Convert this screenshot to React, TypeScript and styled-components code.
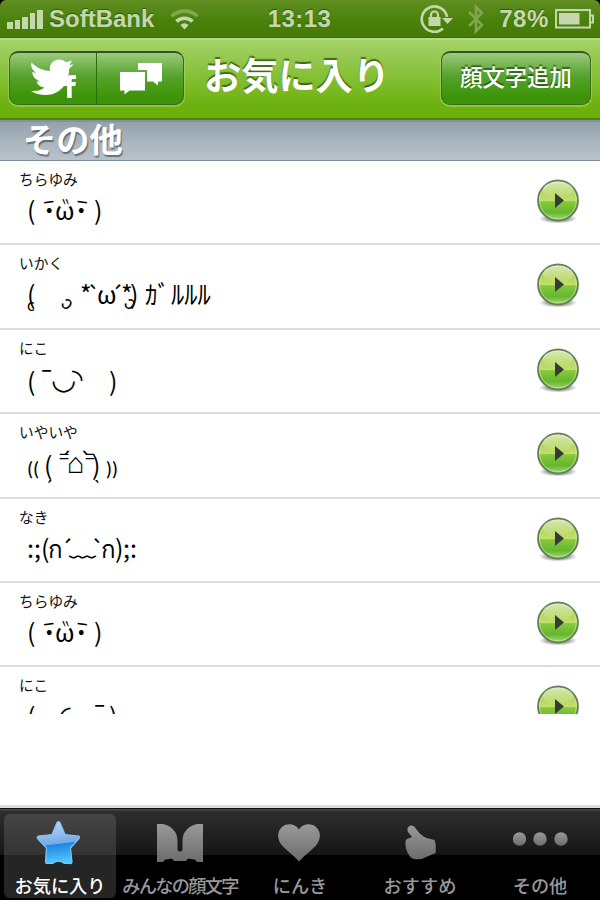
import React from 'react';
import styled, { createGlobalStyle } from 'styled-components';

const jp = '"Noto Sans CJK JP", sans-serif';

const GlobalStyle = createGlobalStyle`
  * { box-sizing: border-box; }
  body { margin: 0; background: #000; font-family: ${jp}; }
`;

const Screen = styled.main`
  width: 600px;
  height: 900px;
  display: flex;
  flex-direction: column;
  background: #fff;
  overflow: hidden;
`;

const StatusWrap = styled.div`
  background: #000;
  flex: none;
`;

const StatusBar = styled.header`
  height: 38px;
  display: grid;
  grid-template-columns: 1fr auto 1fr;
  align-items: center;
  padding: 0 6px 0 7px;
  border-radius: 6px 6px 0 0;
  border-bottom: 1px solid #3b6a08;
  background: linear-gradient(#618f22, #48800a 60%, #457b06);
  color: #c6d7ae;
  font: bold 24px/38px "Liberation Sans", sans-serif;
  text-shadow: 0 -1px 1px #2f5a04;
`;

const StatusGroup = styled.div<{ $end?: boolean }>`
  display: flex;
  align-items: center;
  height: 36px;
  justify-content: ${p => (p.$end ? 'flex-end' : 'flex-start')};
`;

const Carrier = styled.span`
  margin: 0 16px 0 5px;
`;

const Clock = styled.span`
  margin-right: 2px;
  letter-spacing: 0.4px;
`;

const Percent = styled.span`
  margin: 0 6px 0 14px;
  letter-spacing: 0.6px;
`;

const Icon = styled.svg`
  display: block;
  flex: none;
  overflow: visible;
`;

const LockSlot = styled.span`
  margin-right: 15px;
`;

const NavBar = styled.nav`
  flex: none;
  height: 82px;
  display: flex;
  align-items: flex-start;
  padding: 11px 9px 0;
  border-top: 2px solid #b4dc82;
  border-bottom: 2px solid #4f850c;
  background: linear-gradient(#a4d269, #6cb10d 85%, #6bb00b);
`;

const ButtonGroup = styled.div`
  display: flex;
  height: 54px;
  border: 1px solid #3c6a1c;
  border-top: 2px solid #375024;
  border-radius: 9px;
  background: linear-gradient(#9cca80, #57a32d 45%, #3d9408 85%, #3c9209);
  box-shadow: 0 1px 1px 1px rgba(190, 225, 140, 0.45);
  overflow: hidden;
`;

const IconButton = styled.button<{ $divided?: boolean }>`
  width: ${p => (p.$divided ? 87 : 86)}px;
  display: flex;
  align-items: center;
  justify-content: center;
  border: 0;
  border-right: ${p => (p.$divided ? '1px solid #28700c' : '0')};
  padding: 0;
  background: none;
`;

const Title = styled.h1`
  margin: -10px 0 0 20px;
  width: 237px;
  font-size: 37.2px;
  line-height: 66px;
  font-weight: 700;
  color: #fff;
  text-shadow: 0 -2px 1px rgba(40, 75, 10, 0.75);
`;

const TextButton = styled.button`
  width: 148px;
  height: 46px;
  border: 0;
  padding: 0;
  background: none;
  color: #fff;
  font: 500 22.3px/46px ${jp};
  text-shadow: 0 -2px 1px rgba(30, 70, 10, 0.7);
`;

const SectionHeader = styled.h2`
  flex: none;
  margin: 0;
  height: 41px;
  padding-left: 23px;
  border-top: 2px solid #84929d;
  border-bottom: 1px solid #7f8c98;
  background: linear-gradient(#93a2ac, #aab5be 55%, #b8c2cb);
  color: #fff;
  font-size: 33.3px;
  line-height: 31px;
  font-weight: 700;
  text-shadow: 1px 2px 1px rgba(60, 70, 80, 0.65);
`;

const List = styled.ul`
  flex: none;
  margin: 0;
  padding: 0;
  height: 553px;
  overflow: hidden;
  list-style: none;
`;

const Row = styled.li`
  height: 84.4px;
  display: flex;
  align-items: flex-start;
  justify-content: space-between;
  padding: 0 18px 0 19px;
  border-bottom: 2px solid #dcdcdc;
`;

const RowText = styled.div`
  padding-top: 8px;
`;

const RowName = styled.div`
  font-size: 14.7px;
  line-height: 20px;
  height: 20px;
  color: #111;
`;

const Face = styled.div`
  display: grid;
  justify-items: start;
  align-items: baseline;
  height: 40px;
  color: #000;
  white-space: pre;
`;

const Glyph = styled.span<{ $x: number; $y?: number; $size?: number; $turn?: number; $flip?: boolean; $sx?: number; $bold?: boolean }>`
  grid-area: 1 / 1;
  margin-left: ${p => p.$x - 19}px;
  font-size: ${p => p.$size ?? 25}px;
  font-weight: ${p => (p.$bold ? 500 : 400)};
  line-height: 40px;
  transform: translateY(${p => p.$y ?? 0}px) rotate(${p => p.$turn ?? 0}deg)
    scaleX(${p => (p.$flip ? -1 : 1) * (p.$sx ?? 1)});
`;

const RowArrow = styled.div`
  padding-top: 17px;
`;

const Filler = styled.div`
  flex: 1;
  border-bottom: 3px solid #dedede;
`;

const TabBar = styled.footer`
  flex: none;
  height: 92px;
  display: grid;
  grid-template-columns: repeat(5, minmax(0, 1fr));
  padding: 3px 0 3px;
  border-top: 1px solid #111;
  background: linear-gradient(#484848 0 1px, #2e2e2e 2px, #151515 46px, #000 46px);
`;

const Tab = styled.div<{ $active?: boolean }>`
  display: flex;
  flex-direction: column;
  align-items: center;
  border-radius: 6px;
  margin: 2px 4px 0;
  background: ${p => (p.$active ? 'linear-gradient(#454545, #333 41px, #252525 41px)' : 'none')};
  color: ${p => (p.$active ? '#fff' : '#999')};
`;

const TabIcon = styled.div`
  height: 58px;
  display: flex;
  align-items: center;
`;

const TabLabel = styled.span<{ $tight?: boolean }>`
  font-size: 18.2px;
  line-height: 26px;
  font-weight: 500;
  white-space: nowrap;
  letter-spacing: ${p => (p.$tight ? '-1.7px' : '0')};
`;

type Mark = { t: string; x: number; y?: number; size?: number; turn?: number; flip?: boolean; sx?: number; bold?: boolean };

const chira: Mark[] = [
  { t: '(', x: 27 }, { t: '•', x: 46, size: 19, y: -4 }, { t: 'ˉ', x: 37, y: -1, turn: -8, bold: true },
  { t: 'ω', x: 55 }, { t: '〃', x: 60, size: 11, y: -14, flip: true, bold: true },
  { t: '•', x: 78, size: 19, y: -4 }, { t: 'ˉ', x: 69, y: -1, turn: 8, bold: true }, { t: ')', x: 94 },
];

const rows: { name: string; marks: Mark[] }[] = [
  { name: 'ちらゆみ', marks: chira },
  {
    name: 'いかく',
    marks: [
      { t: '(', x: 27 }, { t: 'c', x: 27, y: 7, size: 15 },
      { t: 'ɔ', x: 64, y: 6, size: 19, turn: 40 }, { t: '*', x: 80 }, { t: '`', x: 87, size: 23 },
      { t: 'ω', x: 97 }, { t: '´', x: 110, size: 23 }, { t: '*', x: 121 }, { t: ')', x: 130 },
      { t: 'ɔ', x: 127, y: 6, size: 19, turn: 40 },
      { t: 'ｶﾞ', x: 145 }, { t: 'ﾙﾙﾙ', x: 171, size: 26.5 },
    ],
  },
  {
    name: 'にこ',
    marks: [
      { t: '(', x: 27 }, { t: '¯', x: 39, y: -2, sx: 1.2 }, { t: '◡', x: 50.5, y: -2, size: 29, bold: true },
      { t: '◝', x: 72, y: -3, size: 27, bold: true }, { t: ')', x: 109 },
    ],
  },
  {
    name: 'いやいや',
    marks: [
      { t: '((', x: 27, size: 17, bold: true }, { t: '(', x: 44 }, { t: 'ˏ', x: 46, y: 4, size: 20 },
      { t: '=', x: 59, y: -12, size: 18 }, { t: '´', x: 60, y: -7, size: 20 },
      { t: '⌂', x: 67, y: -2, size: 29, bold: true }, { t: '=', x: 85, y: -12, size: 18 }, { t: '`', x: 80, y: -7, size: 20 },
      { t: ')', x: 92 }, { t: 'ˎ', x: 94, y: 4, size: 20 }, { t: '))', x: 106, size: 17, bold: true },
    ],
  },
  {
    name: 'なき',
    marks: [
      { t: ':;', x: 27 }, { t: '(', x: 41 }, { t: 'ก', x: 48, size: 24 }, { t: '´', x: 60, size: 23 }, { t: '﹏', x: 69, y: -2, size: 27 },
      { t: '`', x: 91, size: 23 }, { t: 'ก', x: 101, size: 24 }, { t: ')', x: 115 }, { t: ';:', x: 123 },
    ],
  },
  { name: 'ちらゆみ', marks: chira },
  {
    name: 'にこ',
    marks: [
      { t: '(', x: 27 }, { t: '◜', x: 60, y: -1, size: 27, bold: true }, { t: '◡', x: 73, y: 3 },
      { t: '¯', x: 92, y: -2, sx: 1.2 }, { t: ')', x: 109 },
    ],
  },
];

const Arrow = () => (
  <Icon width="46" height="50" viewBox="0 0 46 50">
    <defs>
      <linearGradient id="ball" x1="0" y1="0" x2="0" y2="1">
        <stop offset="0" stopColor="#9cc843" />
        <stop offset="0.5" stopColor="#c2de6c" />
        <stop offset="0.53" stopColor="#86c93c" />
        <stop offset="0.8" stopColor="#66b62f" />
        <stop offset="1" stopColor="#a5dc7c" />
      </linearGradient>
      <linearGradient id="shine" x1="0" y1="0" x2="0" y2="1">
        <stop offset="0" stopColor="#fff" stopOpacity="0.6" />
        <stop offset="1" stopColor="#fff" stopOpacity="0" />
      </linearGradient>
      <radialGradient id="shade">
        <stop offset="0.5" stopColor="#555" stopOpacity="0.6" />
        <stop offset="1" stopColor="#555" stopOpacity="0" />
      </radialGradient>
    </defs>
    <ellipse cx="22" cy="40.5" rx="19" ry="5" fill="url(#shade)" />
    <circle cx="22" cy="22.5" r="20" fill="url(#ball)" stroke="#64805a" strokeWidth="1.8" />
    <circle cx="22" cy="22.5" r="18.3" fill="none" stroke="#d2eca8" strokeWidth="1" opacity="0.6" />
    <ellipse cx="22" cy="12" rx="15" ry="8.5" fill="url(#shine)" />
    <path d="M19 15v15l9-7.5z" fill="#383b35" />
  </Icon>
);

const Signal = () => (
  <Icon width="37" height="20" viewBox="0 0 37 20" fill="#c6d7ae">
    <path d="M0 13h6v7H0zM8 11h5v9H8zM15 8h6v12h-6zM23 4h5v16h-5zM30 1h6v19h-6z" />
  </Icon>
);

const Wifi = () => (
  <Icon width="30" height="22" viewBox="0 0 30 22" fill="none" strokeWidth="3.6">
    <path d="M1.5 8.3a19 19 0 0 1 26 0" stroke="#82a84f" />
    <path d="M6.5 13.5a11.5 11.5 0 0 1 16 0" stroke="#c6d7ae" />
    <path d="M10.3 17q4.2-3.5 8.4 0l-4.2 4.6z" fill="#c6d7ae" />
  </Icon>
);

const RotationLock = () => (
  <Icon width="34" height="30" viewBox="0 0 34 30">
    <path d="M28 13A12.7 12.7 0 1 0 24 24.5" fill="none" stroke="#c6d7ae" strokeWidth="2.6" />
    <path d="M23 14h11l-5.500 6z" fill="#c6d7ae" />
    <path d="M9.500 13h12v9h-12z" fill="#c6d7ae" />
    <path d="M12 13v-2a3.500 3.500 0 0 1 7 0v2" fill="none" stroke="#c6d7ae" strokeWidth="2.2" />
  </Icon>
);

const Bluetooth = () => (
  <Icon width="17" height="28" viewBox="0 0 17 28">
    <path d="M1 7l13 13-6 6V2l6 6L1 21" fill="none" stroke="#82a64d" strokeWidth="2.6" />
  </Icon>
);

const Battery = () => (
  <Icon width="39" height="20" viewBox="0 0 39 20">
    <rect x="1" y="1" width="34" height="17.5" fill="none" stroke="#c6d7ae" strokeWidth="2" />
    <path d="M4 4h20.5v11.500H4z" fill="#c6d7ae" />
    <path d="M35 6.500h3v7h-3" fill="none" stroke="#c6d7ae" strokeWidth="2" />
  </Icon>
);

const SocialIcon = () => (
  <Icon width="47" height="40" viewBox="0 0 47 40" fill="#fff">
    <path d="M1.500 3.500C7 9 13 11.500 20 12 18.500 4 25 .5 29 .5c3 0 5.200 1 7 2.800L42 1.500 39.500 6l4-.7L39 10c.5 15-10 26-23 26-6 0-11-1.500-15-4 6 .5 10-.8 13.500-3.500-4.500-.5-7-3-8-6h4C5 20.500 2.500 17.500 2.300 13l4 1C2 10.500.5 7.500 1.500 3.500z" />
    <path d="M37 39V27h-3v-4h3v-2.500c0-3.500 2-4.500 5-4.500h4v4h-3c-1 0-1.300.5-1.300 1.300V23H46l-.6 4h-3.700v12z" />
  </Icon>
);

const ChatIcon = () => (
  <Icon width="41" height="34" viewBox="0 0 41 34" fill="#fff">
    <path d="M18 1h24v18.500h-4v4l-5-4h-6V8h-9z" />
    <path d="M0 10h25v18.500H9.500l-5 4v-4H0z" />
  </Icon>
);

const greyFill = (
  <defs>
    <linearGradient id="grey" x1="0" y1="0" x2="0" y2="1">
      <stop offset="0" stopColor="#999" />
      <stop offset="1" stopColor="#6c6c6c" />
    </linearGradient>
  </defs>
);

const StarIcon = () => (
  <Icon width="48" height="46" viewBox="0 0 48 46">
    <defs>
      <linearGradient id="star" x1="0" y1="0" x2="0.12" y2="1">
        <stop offset="0" stopColor="#c2daf5" />
        <stop offset="0.57" stopColor="#71a9e8" />
        <stop offset="0.59" stopColor="#2483e0" />
        <stop offset="1" stopColor="#4cc6ff" />
      </linearGradient>
    </defs>
    <path d="M21 2.500q1.500-1.500 3 0l5 12 13.500 1.500q1.800 .5 .5 2.500L34.500 28l1.500 14q-.5 2-2.500 1.500h-5q-6-4.500-12 0h-5q-2 0-2-2L10.500 28 1.500 18.500q-1-2 1-2.500L16 14.500z" fill="url(#star)" stroke="#80c5f7" strokeWidth="1.2" strokeLinejoin="round" />
  </Icon>
);

const MouthIcon = () => (
  <Icon width="46" height="38" viewBox="0 0 46 38">
    {greyFill}
    <path d="M0 0h6c9 2 14.500 8 14.500 17v9a2.800 2.800 0 0 0 5 0v-9C25.500 8 31 2 40 0h6v38h-6q-2-3.500-4.500-2.500l-4-1-3 2.500h-11l-3-2.500-4 1Q8 34.500 6 38H0z" fill="url(#grey)" />
  </Icon>
);

const HeartIcon = () => (
  <Icon width="46" height="38" viewBox="0 0 46 38">
    <path d="M22 5.500C26-.8 34-.8 38.500 2.500 45 8 43.500 16 39 21.500 34 27 26.500 32 22 37.500 17.500 32 10 27 5 21.500.5 16-1 8 5.500 2.500 10-.8 18-.8 22 5.500z" fill="url(#grey)" />
  </Icon>
);

const ThumbIcon = () => (
  <Icon width="32" height="36" viewBox="0 0 32 36">
    <path d="M4 2.500C6-.5 9.500 0 11.500 3c2 3 6 8 11 10l8 2c1.500 4 1.700 8 1 13-5 2-9 4-14 6-5 .7-8 .2-10-1-3-3-6-8-6-14-.4-4 1-5 4-6l2.500-1C5 8 2 6 4 2.500z" fill="url(#grey)" />
  </Icon>
);

const MoreIcon = () => (
  <Icon width="56" height="22" viewBox="0 0 56 22" fill="url(#grey)">
    <circle cx="7.500" cy="7" r="6.700" /><circle cx="28" cy="7" r="6.700" /><circle cx="49" cy="7" r="6.700" />
  </Icon>
);

const tabs = [
  { label: 'お気に入り', icon: <StarIcon />, active: true },
  { label: 'みんなの顔文字', icon: <MouthIcon />, tight: true },
  { label: 'にんき', icon: <HeartIcon /> },
  { label: 'おすすめ', icon: <ThumbIcon /> },
  { label: 'その他', icon: <MoreIcon /> },
];

export default function App() {
  return (
    <Screen>
      <GlobalStyle />
      <StatusWrap>
        <StatusBar>
          <StatusGroup><Signal /><Carrier>SoftBank</Carrier><Wifi /></StatusGroup>
          <Clock>13:13</Clock>
          <StatusGroup $end>
            <LockSlot><RotationLock /></LockSlot>
            <Bluetooth />
            <Percent>78%</Percent>
            <Battery />
          </StatusGroup>
        </StatusBar>
      </StatusWrap>
      <NavBar>
        <ButtonGroup>
          <IconButton $divided><SocialIcon /></IconButton>
          <IconButton><ChatIcon /></IconButton>
        </ButtonGroup>
        <Title>お気に入り</Title>
        <ButtonGroup><TextButton>顔文字追加</TextButton></ButtonGroup>
      </NavBar>
      <SectionHeader>その他</SectionHeader>
      <List>
        {rows.map((row, i) => (
          <Row key={i}>
            <RowText>
              <RowName>{row.name}</RowName>
              <Face>
                {row.marks.map((m, j) => (
                  <Glyph key={j} $x={m.x} $y={m.y} $size={m.size} $turn={m.turn} $flip={m.flip} $sx={m.sx} $bold={m.bold}>{m.t}</Glyph>
                ))}
              </Face>
            </RowText>
            <RowArrow><Arrow /></RowArrow>
          </Row>
        ))}
      </List>
      <Filler />
      <TabBar>
        {tabs.map(tab => (
          <Tab key={tab.label} $active={tab.active}>
            <TabIcon>{tab.icon}</TabIcon>
            <TabLabel $tight={tab.tight}>{tab.label}</TabLabel>
          </Tab>
        ))}
      </TabBar>
    </Screen>
  );
}
